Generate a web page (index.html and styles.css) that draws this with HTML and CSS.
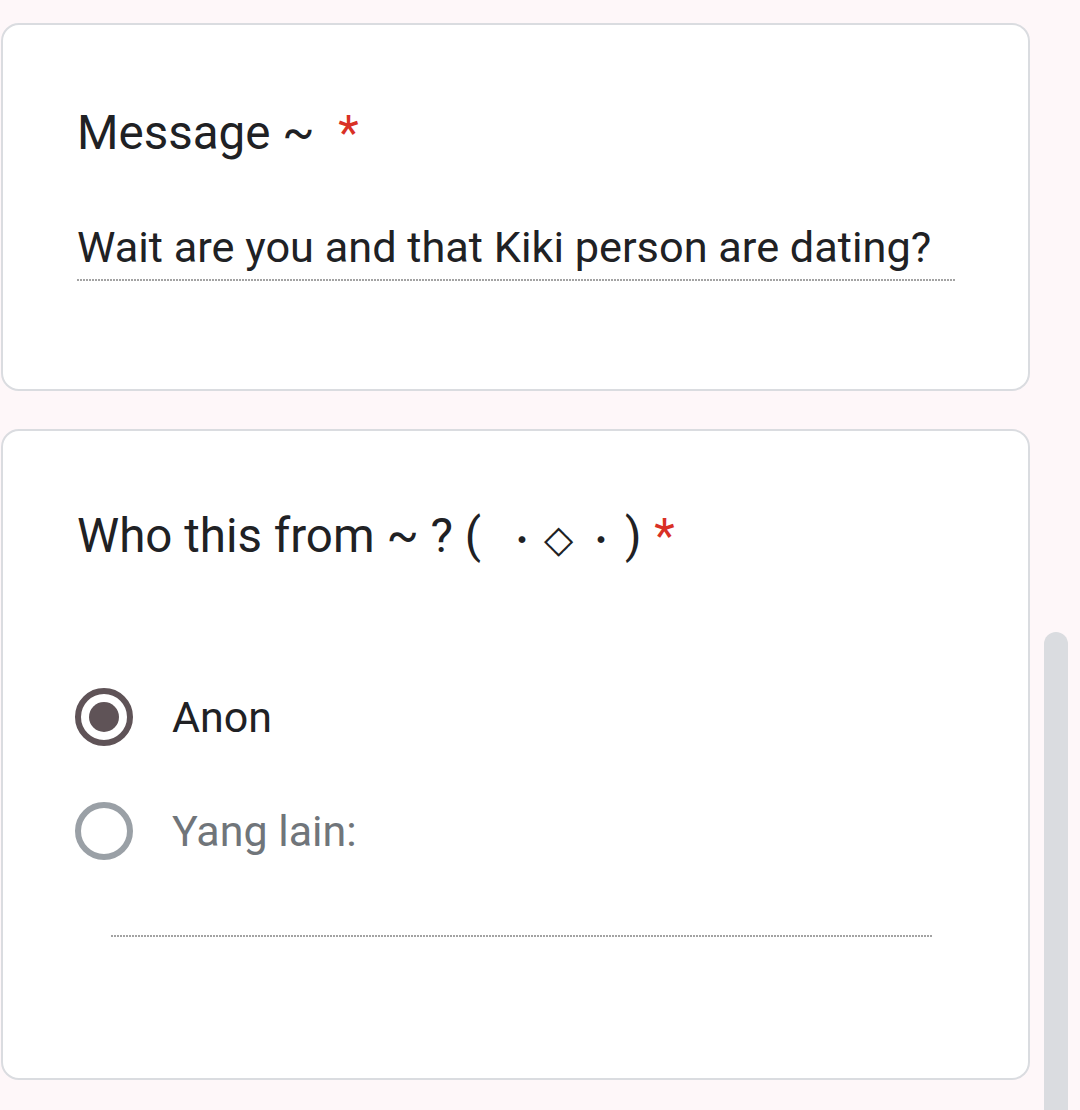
FILE: index.html
```html
<!DOCTYPE html>
<html>
<head>
<meta charset="utf-8">
<link rel="stylesheet" href="styles.css">
</head>
<body>
<div class="page">
  <div class="form">
    <section class="card card-message">
      <div class="q-title">Message ~ <span class="req req-wide">*</span></div>
      <div class="answer">
        <div class="answer-text">Wait are you and that Kiki person are dating?</div>
      </div>
    </section>
    <section class="card card-from">
      <div class="q-title">Who this from ~ ? (<span class="k-dot k-first">・</span><span class="k-dia">◇</span><span class="k-dot k-last">・</span>) <span class="req">*</span></div>
      <div class="options">
        <div class="option">
          <span class="radio checked"><span class="dot"></span></span>
          <span class="opt-label">Anon</span>
        </div>
        <div class="option">
          <span class="radio"></span>
          <span class="opt-label other">Yang lain:</span>
        </div>
        <div class="other-input"></div>
      </div>
    </section>
  </div>
  <div class="scrollbar"><div class="thumb"></div></div>
</div>
</body>
</html>
```
FILE: styles.css
```css
html, body {
  margin: 0;
  padding: 0;
}
body {
  background: #fef7f9;
  font-family: Roboto, "Noto Sans CJK JP", sans-serif;
  color: #202124;
  width: 1080px;
  height: 1110px;
  overflow: hidden;
}
.page {
  display: flex;
  align-items: flex-start;
  height: 1110px;
}
.form {
  width: 1030px;
  padding: 23px 0 0 1px;
  display: flex;
  flex-direction: column;
  gap: 38px;
  box-sizing: border-box;
  flex: none;
}
.card {
  background: #fff;
  border: 2px solid #dadce0;
  border-radius: 18px;
  padding: 80px 72px 0 74px;
}
.card-message {
  height: 368px;
  box-sizing: border-box;
}
.card-from {
  height: 651px;
  box-sizing: border-box;
  padding-top: 77px;
}
.q-title {
  font-size: 47.5px;
  line-height: 56px;
  white-space: nowrap;
}
.req {
  color: #d93025;
  margin-left: 1px;
}
.req-wide {
  margin-left: 12px;
}
.k-dot {
  font-family: "Noto Sans CJK JP", sans-serif;
  font-size: 32px;
}
.k-first {
  margin-left: 25px;
}
.k-last {
  margin-right: 8px;
}
.k-dia {
  font-family: "DejaVu Sans", sans-serif;
  font-size: 38px;
  font-weight: 300;
  margin: 0 12px 0 6px;
}
.answer {
  margin-top: 62px;
  background-image: repeating-linear-gradient(90deg, #a3a3a3 0 2px, transparent 2px 3px);
  background-size: 100% 2px;
  background-position: left bottom;
  background-repeat: no-repeat;
  padding-bottom: 8px;
}
.answer-text {
  font-size: 43.3px;
  line-height: 50px;
  white-space: nowrap;
}
.options {
  margin-top: 121px;
}
.option {
  display: flex;
  align-items: center;
  gap: 39px;
  height: 58px;
  margin-bottom: 56px;
  margin-left: -2px;
}
.radio {
  width: 46px;
  height: 46px;
  border: 6px solid #9aa0a6;
  border-radius: 50%;
  display: flex;
  align-items: center;
  justify-content: center;
  flex: none;
}
.radio.checked {
  border-color: #5f5357;
}
.dot {
  width: 30px;
  height: 30px;
  border-radius: 50%;
  background: #5f5357;
}
.opt-label {
  font-size: 43px;
  line-height: 50px;
}
.opt-label.other {
  color: #70757a;
}
.other-input {
  margin: -27px 24px 0 34px;
  height: 48px;
  background-image: repeating-linear-gradient(90deg, #a3a3a3 0 2px, transparent 2px 3px);
  background-size: 100% 2px;
  background-position: left bottom;
  background-repeat: no-repeat;
}
.scrollbar {
  width: 50px;
  height: 1110px;
  position: relative;
  flex: none;
}
.thumb {
  position: absolute;
  left: 14px;
  top: 632px;
  width: 24px;
  height: 478px;
  background: #dadce0;
  border-radius: 12px 12px 0 0;
}
```
